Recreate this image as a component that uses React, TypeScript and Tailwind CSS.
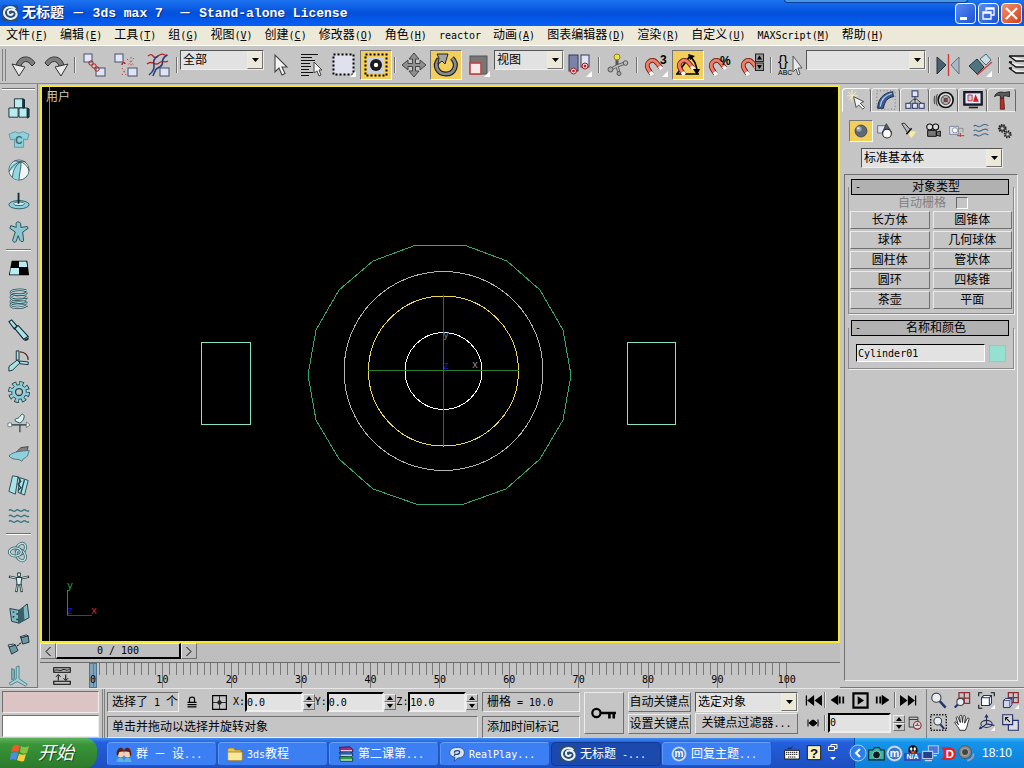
import type { ReactNode } from "react";

const RAISED = "border border-t-[#ebebeb] border-l-[#ebebeb] border-b-[#707070] border-r-[#707070]";
const SUNKEN = "border border-t-[#6f6f6f] border-l-[#6f6f6f] border-b-[#ededed] border-r-[#ededed]";

/* Latin runs are set two pixels smaller than the Chinese ones, so each takes half a Chinese cell */
function Txt({ children }: { children: string }) {
  return (
    <span className="whitespace-pre">
      {children.split(/([\u2e80-\uffff]+)/).map((part, i) =>
        i % 2 ? (
          <span key={i} className="text-[12px]">{part}</span>
        ) : (
          <span key={i} className="text-[10px]">{part}</span>
        )
      )}
    </span>
  );
}

function Svg({ size = 24, children }: { size?: number; children: ReactNode }) {
  return (
    <svg
      width={size}
      height={size}
      viewBox="0 0 24 24"
      fill="none"
      fontFamily="Liberation Sans, sans-serif"
      fontWeight="bold"
      className="shrink-0 overflow-visible"
      aria-hidden="true"
    >
      {children}
    </svg>
  );
}

const flyout = <path d="M24 18v6h-6z" fill="#fff" />;

const magnet = (
  <>
    <path d="M7.500 21L4 15.500C1 9.500 8 4.500 12.500 9.500L17 15" stroke="#6e1d14" strokeWidth="4.800" />
    <path d="M7 20.500L4 15.500C1 9.500 8 4.500 12.500 9.500L16.500 14.500" stroke="#ee7d6a" strokeWidth="3" />
    <path d="M6.500 19l1.800 3M15.500 13.500l2 2.500" stroke="#fff" strokeWidth="3.600" />
  </>
);

const icons: Record<string, ReactNode> = {
  undo: (
    <>
      <path d="M4 13C6 2 18 1 23 10l-3 3C16 7 11 7 9 13z" fill="#7d7d7d" stroke="#333" />
      <path d="M0 11l13 3-6 9z" fill="#e9e9e9" stroke="#333" />
    </>
  ),
  redo: (
    <>
      <path d="M20 13C18 2 6 1 1 10l3 3c4-6 9-6 11 0z" fill="#7d7d7d" stroke="#333" />
      <path d="M24 11l-13 3 6 9z" fill="#e9e9e9" stroke="#333" />
    </>
  ),
  link: (
    <>
      <rect x="2" y="1" width="8" height="8" fill="#e4e8f5" stroke="#44506e" />
      <rect x="14" y="15" width="9" height="8" fill="#dfe4f2" stroke="#44506e" />
      <circle cx="9" cy="10" r="2.200" stroke="#b02020" />
      <circle cx="12" cy="13" r="2.200" stroke="#b02020" />
      <circle cx="15" cy="16" r="2.200" stroke="#b02020" />
    </>
  ),
  unlink: (
    <>
      <rect x="1" y="1" width="8" height="8" fill="#e4e8f5" stroke="#44506e" />
      <rect x="14" y="15" width="9" height="8" fill="#dfe4f2" stroke="#44506e" />
      <path d="M8 12c0-3 3-3 3-1" stroke="#b02020" strokeWidth="1.400" />
      <path d="M13 6l8 7M20 5l-6 7M8 15l4 7M8 22l3-5M17 4v9" stroke="#c04a4a" strokeDasharray="1.500 2" />
    </>
  ),
  bind: (
    <>
      <path d="M2 3c6-5 4 5 10 0s6 1 10-1M1 11c6-5 7 3 12-1s5 1 9-2" stroke="#c02020" strokeWidth="1.300" />
      <path d="M12 3C2 9 14 13 3 22M21 2c-9 6-1 8-7 12M7 23c3-8 4-8 7-9" stroke="#28407c" strokeWidth="1.600" />
      <rect x="14" y="15" width="9" height="8" fill="#dfe4f2" stroke="#44506e" />
    </>
  ),
  cursor: <path d="M7 2v17l4-4 3 7 3-1.500-3-6.500h5z" fill="#f4f4f4" stroke="#444" strokeWidth="1.100" />,
  byName: (
    <>
      <path d="M1 1.500h17M1 4.500h11M1 7.500h14M1 10.500h9M1 13.500h10M1 16.500h8M1 19.500h12M1 22.500h8" stroke="#111" strokeWidth="1.200" />
      <path d="M14 9v11l3-2 2 5 2-1-2-5h3z" fill="#f4f4f4" stroke="#444" />
    </>
  ),
  region: (
    <>
      <rect x="1.500" y="1.500" width="20" height="20" fill="#dfe2ee" stroke="#000" strokeWidth="2" strokeDasharray="2 2" />
      {flyout}
    </>
  ),
  crossing: (
    <>
      <rect x="1.500" y="1.500" width="21" height="21" stroke="#000" strokeWidth="2" strokeDasharray="2 2" />
      <rect x="4" y="4" width="16" height="16" fill="#ccd0dc" />
      <circle cx="12" cy="12" r="6" fill="#1b1b1b" />
      <circle cx="12" cy="12" r="2.200" fill="#fff" />
    </>
  ),
  move: (
    <path
      d="M12 0l5 6h-3.500v4.500H18V7l6 5-6 5v-3.500h-4.500V18H17l-5 6-5-6h3.500v-4.500H6V17l-6-5 6-5v3.500h4.500V6H7z"
      fill="#909090"
      stroke="#444"
    />
  ),
  rotate: (
    <>
      <path d="M18 5c7 7 2 16-6 16S-1 13 5 6" stroke="#222" strokeWidth="5" />
      <path d="M18 5c7 7 2 16-6 16S-1 13 5 6" stroke="#8b8b8b" strokeWidth="2.600" />
      <path d="M3 1h11l-3 10-3-3-4 3 1-6z" fill="#a5a5a5" stroke="#222" />
    </>
  ),
  scale: (
    <>
      <rect x="4" y="3" width="17" height="18" fill="#777" stroke="#555" />
      <rect x="4" y="10" width="11" height="11" fill="#f5eaea" stroke="#c04444" strokeWidth="1.600" />
      {flyout}
    </>
  ),
  pivot: (
    <>
      <rect x="1" y="2" width="9" height="16" fill="#7c83a8" stroke="#333a5c" />
      <rect x="13" y="2" width="8" height="12" fill="#dfe3f3" stroke="#333a5c" />
      <circle cx="5.500" cy="18" r="3" fill="#f7d3d3" stroke="#a02020" />
      <circle cx="17" cy="13" r="3" fill="#f7d3d3" stroke="#a02020" />
      <circle cx="5.500" cy="18" r="1.300" fill="#d01818" />
      <circle cx="17" cy="13" r="1.300" fill="#d01818" />
      {flyout}
    </>
  ),
  manipulate: (
    <>
      <path d="M5 16l6-3 8-3M11 13V5M11 13l2 7" stroke="#555" strokeWidth="3" />
      <path d="M5 16l6-3 8-3M11 13l2 7" stroke="#bbb" strokeWidth="1.400" />
      <circle cx="11" cy="4" r="3" fill="#efe04a" stroke="#8d8420" />
      <circle cx="4.500" cy="16.500" r="2.500" fill="#aaa" stroke="#555" />
      <circle cx="19.500" cy="10" r="2.300" fill="#bbb" stroke="#555" />
      <circle cx="13" cy="20.500" r="2" fill="#aaa" stroke="#555" />
    </>
  ),
  snap3: (
    <>
      {magnet}
      <text x="16" y="11" fontSize="12" fill="#000">3</text>
      {flyout}
    </>
  ),
  snapAngle: (
    <>
      <path d="M1 21L14 3M0 21h23M13 3c5 3 8 9 8 17" stroke="#000" strokeWidth="1.600" />
      <path d="M12 1l7 2-5 4zM17 16h7l-3 6z" fill="#000" />
      {magnet}
    </>
  ),
  snapPercent: (
    <>
      {magnet}
      <text x="12" y="12" fontSize="12" fill="#000">%</text>
    </>
  ),
  snapSpinner: (
    <>
      {magnet}
      <rect x="15.500" y="1" width="8" height="7.500" fill="#999" stroke="#222" />
      <rect x="15.500" y="10" width="8" height="7.500" fill="#999" stroke="#222" />
      <path d="M17 6.500h5l-2.500-4zM17 12h5l-2.500 4z" fill="#000" />
    </>
  ),
  namedSel: <path d="M15 3v16l3-3 2 6 2-1-2-6h4z" fill="#e9e9e9" stroke="#555" />,
  mirror: (
    <>
      <path d="M1 4l9 8-9 9z" fill="#49626b" stroke="#24343a" />
      <path d="M23 4l-8 8 8 9z" fill="#aab8c6" stroke="#64727e" />
      <path d="M12.500 1v22" stroke="#d23a3a" strokeWidth="1.400" />
    </>
  ),
  align: (
    <>
      <path d="M1 13l8-7 7 8-7 7z" fill="#4f7480" stroke="#24343a" />
      <path d="M12 6l6-5 5 6-5 5z" fill="#c8dde4" stroke="#4f6a74" />
      <path d="M9 22L24 9" stroke="#d23a3a" strokeWidth="1.400" />
      {flyout}
    </>
  ),
  layers: (
    <path d="M3 3h24M3 3l7 5h16M3 9l7 5h16M3 9h3M3 15l7 5h16M3 15h3" stroke="#111" strokeWidth="1.300" fill="#eee" />
  ),

  /* reactor bar */
  boxes: (
    <g fill="#b9ecf2" stroke="#142a30">
      <path d="M7 2h9l2 1v9H7z" />
      <path d="M1 12h10v10H1zM12 12h9v10h-9z" />
      <path d="M16 2l2 1v9h-2zM21 12l2 1v9l-2 1z" fill="#1f3a40" />
    </g>
  ),
  shirt: (
    <>
      <path d="M8 4c2 2 6 2 8 0l7 3-2 6-4-1v9H7v-9l-4 1-2-6z" fill="#8fd0da" stroke="#5b98a3" />
      <text x="8" y="17" fontSize="11" fill="#356b76">C</text>
    </>
  ),
  ball: (
    <>
      <circle cx="12" cy="12" r="11" fill="#f0f6f7" stroke="#45636a" />
      <path d="M14 3C8 7 5 13 5 20c2 2 5 3 7 3 0-8 3-14 2-20zM2 9c2-4 7-7 12-6L1 15z" fill="#92d8e2" />
      <path d="M14 3C8 7 5 13 5 20M14 3c1 7-2 12-2 20M14 3C9 4 3 9 1 14M14 3c5 2 8 6 9 10M7 2l7 1 5 0" stroke="#37565e" />
    </>
  ),
  rigid: (
    <>
      <ellipse cx="12" cy="16" rx="11" ry="4.500" fill="#8fd0da" stroke="#2b5963" />
      <ellipse cx="12" cy="15" rx="6" ry="2" fill="#d8f4f7" stroke="#2b5963" />
      <path d="M11.500 3v12" stroke="#142a30" strokeWidth="2" />
    </>
  ),
  star: (
    <path
      d="M11 1c3 0 3 2 3 6l7-1 1 2-6 4 1 9c0 2-3 2-4 0l-2-5-2 6c-1 2-4 1-4-1l3-9-6-4 1-3 6 2c0-3-1-6 2-6z"
      fill="#8cc6d0"
      stroke="#224a54"
    />
  ),
  checker: (
    <>
      <path d="M4 4h17l2 16H1z" fill="#000" />
      <path d="M12 5h8l1 6h-9zM3 12h9v7H2z" fill="#b9ecf2" />
    </>
  ),
  spring: (
    <>
      {[5, 10, 15, 19].map((y) => (
        <g key={y}>
          <path d={`M20 ${y - 2}C14 ${y - 4} 3 ${y - 3} 3 ${y}s12 4 18 0`} stroke="#2b4a52" strokeWidth="2.600" />
          <path d={`M20 ${y - 2}C14 ${y - 4} 3 ${y - 3} 3 ${y}s12 4 18 0`} stroke="#a9dde5" strokeWidth="1.100" />
        </g>
      ))}
    </>
  ),
  damper: (
    <>
      <path d="M1 3l3-2 6 7-3 3zM7 10l4-3 11 12-5 3z" fill="#a8e3ea" stroke="#142a30" strokeWidth="1.200" />
      <path d="M17 23l6-3-1 3-3 1z" fill="#142a30" />
    </>
  ),
  motor: (
    <>
      <path d="M1 18l9-7 3 3-8 8-4 1zM9 1h3v10h-3zM12 12l10 1v3l-9-1z" fill="#a8e3ea" stroke="#142a30" />
      <path d="M13 2c6 0 9 4 9 9" stroke="#5a2d24" strokeWidth="1.300" />
    </>
  ),
  gear: (
    <>
      <circle cx="12" cy="12" r="9.500" stroke="#25454d" strokeWidth="5" strokeDasharray="4.600 2.860" />
      <circle cx="12" cy="12" r="8" fill="#8fd0da" stroke="#25454d" />
      <circle cx="12" cy="12" r="9" stroke="#8fd0da" strokeWidth="4" strokeDasharray="2.900 4.170" strokeDashoffset="-.7" />
      <circle cx="12" cy="12" r="3.800" fill="#c4c4c4" stroke="#25454d" strokeWidth="1.400" />
    </>
  ),
  vane: (
    <>
      <path d="M0 14h23M13 14v8" stroke="#25353a" strokeWidth="1.200" />
      <path d="M8 10c-1-4 2-2 4-4s3-5 5-3-1 8-4 9z" fill="#d8f4f7" stroke="#25454d" />
      <path d="M0 12h4v4H0zM20 11l4 3-4 3z" fill="#fff" stroke="#25454d" strokeWidth=".6" />
    </>
  ),
  boat: (
    <>
      <path d="M9 10l5-5 8-1-2 7z" fill="#8c7b80" stroke="#444" />
      <path d="M1 14c5-5 14-5 22-6-1 6-3 8-6 9l-2 3-3-2C7 18 3 17 1 14z" fill="#8fd0da" stroke="#4b717a" />
    </>
  ),
  fracture: (
    <>
      <path d="M5 2l6 1-3 19-7-3zM13 4l9 3-4 16-7-3z" fill="#a8e3ea" stroke="#25454d" />
      <path d="M11 3l3 5-3 3 3 4-3 3M18 6l-4 15" stroke="#25454d" strokeWidth="1.400" />
    </>
  ),
  water: (
    <>
      {[6, 12, 18].map((y) => (
        <path key={y} d={`M1 ${y}c3-3 4 3 7.500 0s4 3 7.500 0 4 3 7 0`} stroke="#3f7683" strokeWidth="1.500" />
      ))}
    </>
  ),
  knot: (
    <>
      {[30, 150, 270].map((a) => (
        <g key={a} transform={`rotate(${a} 12 12)`}>
          <ellipse cx="12" cy="8" rx="4.500" ry="6.500" stroke="#365d66" strokeWidth="3.200" />
          <ellipse cx="12" cy="8" rx="4.500" ry="6.500" stroke="#b9dfe5" strokeWidth="1.600" />
        </g>
      ))}
    </>
  ),
  ragdoll: (
    <>
      <path d="M1 5l9 2M14 7l9-2M10.500 13l-1.500 9M13.500 13l1.500 9" stroke="#1d2f34" strokeWidth="2.600" />
      <path d="M2 5.200l8 1.800M14 7l8-1.800M10.500 13l-1.500 8M13.500 13l1.500 8" stroke="#d8f4f7" strokeWidth="1" />
      <path d="M9 6h6l-1 8h-4zM10.500 1h3v4h-3z" fill="#d8f4f7" stroke="#1d2f34" />
    </>
  ),
  hinge: (
    <>
      <path d="M2 6l10 2v14L4 20zM12 8l9-7 2 15-11 6z" fill="#7fb9c3" stroke="#1d3a41" />
      <path d="M12 8l5-4 1 15-6 3z" fill="#3c5f67" />
      <path d="M5 10h2M5 15h2M9 12h2M9 18h2" stroke="#1d3a41" strokeWidth="1.500" />
    </>
  ),
  p2p: (
    <>
      <path d="M1 14l7-2 3 6-7 4zM14 4l8-2 1 7-7 2z" fill="#6b98a2" stroke="#1d2f34" />
      <path d="M14 4l8-2-2-1-7 2zM1 14l7-2-2-1-6 1z" fill="#d8f4f7" stroke="#1d2f34" />
      <path d="M10 13l5-4" stroke="#1d2f34" strokeWidth="1.400" strokeDasharray="2 1" />
    </>
  ),
  prismatic: (
    <>
      <path d="M9 2l3-1v14l9 6-2 2-9-5-7 4-2-2 8-5z" fill="#9fd2da" stroke="#4b7f8a" />
      <path d="M4 4l3 1v10l-3 1z" fill="#7fb3bd" stroke="#4b7f8a" />
    </>
  ),

  /* command panel */
  create: (
    <>
      <path d="M6 0v14M0 7h13M1 2l11 10M11 2L2 12" stroke="#f6efb6" strokeWidth="1.200" />
      <path d="M8 8l3 13 3-3 5 5 2-2-5-5 4-2z" fill="#f4f4f4" stroke="#333" />
    </>
  ),
  modify: (
    <>
      <path d="M2 22C2 11 9 3 20 2l1 6c-7 1-11 6-12 14z" fill="#3a5a92" stroke="#15213e" />
      <path d="M5 20C6 11 11 6 19 4" stroke="#a8c4ee" strokeWidth="1.500" />
      <path d="M1 1h22v22H1z" stroke="#555" strokeDasharray="1 3" />
    </>
  ),
  hierarchy: (
    <>
      <path d="M12 7v5M4 17l6-6h4l7 6M12 11v6" stroke="#222" />
      <g fill="#dfe4f2" stroke="#3e4a72" strokeWidth="1.400">
        <rect x="8.500" y="1" width="7" height="7" />
        <rect x="1" y="16" width="6" height="6" />
        <rect x="9" y="16" width="6" height="6" />
        <rect x="17" y="16" width="6" height="6" />
      </g>
    </>
  ),
  motion: (
    <>
      <circle cx="14" cy="12" r="9" fill="#ddd" stroke="#111" strokeWidth="2" />
      <circle cx="14" cy="12" r="5.500" fill="#b4b4b4" stroke="#333" />
      <path d="M10 8l8 8M18 8l-8 8" stroke="#444" />
      <circle cx="14" cy="12" r="2" fill="#c33" stroke="#333" />
      <path d="M4 5c-2 4-2 10 0 14M1 7c-1 3-1 7 0 10" stroke="#222" />
    </>
  ),
  display: (
    <>
      <path d="M1 2h22v16H1z" fill="#22284a" stroke="#111" strokeWidth="1.500" />
      <path d="M3 4h18v12H3z" fill="#e8ecf8" />
      <path d="M6 6h5v7H6z" fill="#c8cff0" stroke="#c02020" />
      <path d="M12 14l3-9 4 9z" fill="#d02020" />
      <path d="M7 21h11" stroke="#222" strokeWidth="2" />
    </>
  ),
  utilities: (
    <>
      <path d="M3 8c2-6 8-6 12-5l6-1v6l-5-1h-2v3h-4V7c-2-1-4-1-7 1z" fill="#5a5a5a" stroke="#1a1a1a" />
      <path d="M10 10h4l1 13h-5z" fill="#b53224" stroke="#5a140e" />
    </>
  ),
  sphere: (
    <>
      <circle cx="12" cy="12" r="9" fill="#5e6878" stroke="#2d3440" />
      <circle cx="9" cy="9" r="4" fill="#97a2b2" />
      <circle cx="8" cy="8" r="1.800" fill="#dbe3ee" />
    </>
  ),
  shapes: (
    <>
      <path d="M1 4h12v11H1z" fill="#dfe4f2" stroke="#5a6284" strokeWidth="1.300" />
      <path d="M14 1l8 13H8z" fill="#555c74" stroke="#222" />
      <circle cx="15" cy="16" r="6.500" fill="#fff" stroke="#222" strokeWidth="1.600" />
    </>
  ),
  light: (
    <>
      <path d="M14 12l9 1-8 10-3-6z" fill="#f7ef9a" />
      <path d="M1 1l4-1 9 10-4 5z" fill="#b8b8b8" stroke="#222" strokeWidth="1.300" />
      <path d="M16 8L8 17" stroke="#111" strokeWidth="2.200" />
    </>
  ),
  camera: (
    <>
      <circle cx="7" cy="6" r="4.500" fill="#ddd" stroke="#111" strokeWidth="1.600" />
      <circle cx="16" cy="6" r="4.500" fill="#ddd" stroke="#111" strokeWidth="1.600" />
      <path d="M4 11h13v9H4zM17 14l6-2v8l-6-2z" fill="#777" stroke="#111" strokeWidth="1.500" />
    </>
  ),
  helper: (
    <>
      <path d="M1 5h13v12H1z" fill="#e4e8f5" stroke="#5a6284" />
      <circle cx="9" cy="11" r="4" fill="#fff" stroke="#666" />
      <path d="M12 19h11M17 15v6" stroke="#c03a3a" strokeWidth="1.500" />
      <path d="M15 8h6v6" stroke="#777" />
    </>
  ),
  warp: (
    <>
      {[5, 12, 19].map((y) => (
        <path key={y} d={`M1 ${y}c4-5 5 3 10 0s7-4 12-1`} stroke="#44688a" strokeWidth="1.600" />
      ))}
    </>
  ),
  systems: (
    <>
      <circle cx="8" cy="8" r="5" fill="#555" stroke="#222" strokeWidth="3" strokeDasharray="2 1.500" />
      <circle cx="16" cy="17" r="4.500" fill="#777" stroke="#222" strokeWidth="3" strokeDasharray="2 1.500" />
      <circle cx="8" cy="8" r="1.800" fill="#ddd" />
      <circle cx="16" cy="17" r="1.600" fill="#ddd" />
    </>
  ),

  /* status bar */
  curve: (
    <>
      <path d="M1 1h22v6H1zM1 19h22v4H1z" stroke="#000" strokeWidth="1.400" />
      <path d="M2 5c4-3 6 1 10-1s6 2 10-1M7 18v-7M4 13l3-3 3 3M17 10v7M14 15l3 3 3-3" stroke="#000" strokeWidth="1.300" />
    </>
  ),
  lock: (
    <>
      <path d="M7 12V6c0-5 10-5 10 0v6" stroke="#000" strokeWidth="2.400" />
      <path d="M3 12.500h18M3 17h18M3 21.500h18" stroke="#000" strokeWidth="2.500" />
    </>
  ),
  absolute: (
    <>
      <path d="M1 1h22v22H1z" stroke="#000" strokeWidth="1.800" />
      <path d="M12 1v22M1 12h22" stroke="#000" strokeWidth="1.200" />
      <circle cx="12" cy="12" r="3.500" fill="#222" />
    </>
  ),
  key: (
    <>
      <circle cx="5" cy="12" r="3.800" stroke="#000" strokeWidth="2" />
      <path d="M9 12h14M17 12v5M21 12v5" stroke="#000" strokeWidth="2.400" />
    </>
  ),
  toStart: <path d="M2 5v14M12 6v12L4.500 12zM23 6v12l-8-6z" fill="#000" stroke="#000" strokeWidth="1.800" />,
  prevFrame: <path d="M11 6v12L2 12zM15 6v12M21 6v12" fill="#000" stroke="#000" strokeWidth="3" />,
  play: (
    <>
      <path d="M2 2h20v20H2z" stroke="#000" strokeWidth="3" />
      <path d="M8 6v12l9-6z" fill="#000" />
    </>
  ),
  nextFrame: <path d="M13 6v12l9-6zM3 6v12M9 6v12" fill="#000" stroke="#000" strokeWidth="3" />,
  toEnd: <path d="M22 5v14M12 6v12l7.500-6zM1 6v12l8-6z" fill="#000" stroke="#000" strokeWidth="1.800" />,
  keyMode: <path d="M2 5v14M11 6v12l-7-6zM13 6v12l7-6zM22 5v14" fill="#000" stroke="#000" strokeWidth="2" />,
  timeConfig: (
    <>
      <path d="M2 2h15v17H2zM2 6h15" stroke="#333" strokeWidth="1.600" />
      <circle cx="16" cy="16" r="6.500" fill="#ddd" stroke="#8c2430" strokeWidth="1.800" />
      <path d="M16 12v4h4M12 16h4" stroke="#8c2430" strokeWidth="1.500" />
    </>
  ),
  zoom: (
    <>
      <path d="M13 12l9 10" stroke="#223070" strokeWidth="3.500" />
      <circle cx="9" cy="8" r="6.500" fill="#e8ecf4" stroke="#444" strokeWidth="1.600" />
    </>
  ),
  zoomAll: (
    <>
      <path d="M7 1h15v15H7zM14.500 1v15M7 8.500h15" stroke="#8c3038" strokeWidth="1.800" />
      <circle cx="9" cy="14" r="5" fill="#e8ecf4" stroke="#444" strokeWidth="1.500" />
      <path d="M5 18l-4 4" stroke="#223070" strokeWidth="3" />
    </>
  ),
  extents: (
    <>
      <path d="M1 6V1h5M18 1h5v5M6 23H1v-5" stroke="#111" strokeWidth="1.500" />
      <path d="M5 8l3-3h11v11l-3 3H5z" fill="#fff" stroke="#223070" strokeWidth="1.500" />
      <path d="M5 8h11v11M16 8l3-3" stroke="#223070" strokeWidth="1.500" />
      {flyout}
    </>
  ),
  extentsAll: (
    <>
      <path d="M9 1h14v14H9zM16 1v14M9 8h14" stroke="#8c3038" strokeWidth="1.800" />
      <path d="M2 12l3-3h9v9l-3 4H2z" fill="#cfd6ea" stroke="#223070" strokeWidth="1.400" />
      <path d="M2 12h9v10M11 12l3-3" stroke="#223070" />
      {flyout}
    </>
  ),
  zoomRegion: (
    <>
      <path d="M1 1h22v22H1z" stroke="#000" strokeWidth="2" strokeDasharray="2 2" />
      <path d="M14 14l6 7" stroke="#223070" strokeWidth="3" />
      <circle cx="11" cy="10" r="5.500" fill="#e8ecf4" stroke="#444" strokeWidth="1.500" />
    </>
  ),
  pan: (
    <path
      d="M8 23c-1-4-5-7-7-11 1-2 3 0 5 3L3 5c1-2 3-1 3 1l3 6-1-9c1-2 3-2 3 0l1 9 1-9c1-2 3-1 3 1l-1 9 4-7c1-1 3 0 2 2-2 5-2 10-5 15z"
      fill="#fff"
      stroke="#222"
      strokeWidth="1.300"
    />
  ),
  arc: (
    <>
      <ellipse cx="12" cy="14" rx="8" ry="5" stroke="#333" strokeWidth="1.500" />
      <path d="M12 2v12L3 21M12 14l11 2" stroke="#223070" strokeWidth="1.600" />
      <path d="M12 0l3 5H9zM1 22l2-5 3 3z" fill="#223070" />
      {flyout}
    </>
  ),
  maximize: (
    <>
      <path d="M9 9h14v14H9z" fill="#ddd" stroke="#223070" strokeWidth="1.600" />
      <path d="M1 1h14v14H1z" fill="#d4d4d4" stroke="#223070" strokeWidth="1.600" />
      <path d="M5 5l6 6M5 9V5h4" stroke="#111" strokeWidth="1.500" />
    </>
  ),

  /* task bar */
  max: (
    <>
      <rect width="24" height="24" rx="3" fill="#2b4f72" />
      <path d="M20 6C15 1 4 2 3 11c0 9 10 12 16 8 5-4 3-11-3-12-5-1-8 2-7 5 1 4 7 4 7 0" stroke="#e8f2f8" strokeWidth="3" />
    </>
  ),
  people: (
    <>
      <path d="M1 24c0-9 11-9 11 0zM12 24c0-9 11-9 11 0z" fill="#58b6d8" />
      <circle cx="7" cy="12" r="5" fill="#f6d2b0" />
      <circle cx="17" cy="12" r="5" fill="#f6d2b0" />
      <path d="M1 13C0 0 12 0 12 8L5 9l-2 6zM12 8c1-9 12-7 11 6l-2 1-1-6z" fill="#5e1e16" />
    </>
  ),
  folder: (
    <>
      <path d="M1 5l2-2h7l2 3h9v4H1z" fill="#e8c452" stroke="#9a7a20" strokeWidth="1.200" />
      <path d="M1 9h22v11l-2 2H3l-2-2z" fill="#f9e79a" stroke="#9a7a20" strokeWidth="1.200" />
    </>
  ),
  rar: (
    <>
      <path d="M2 2l16-1 4 4v4H4z" fill="#a5287a" stroke="#2d0a20" />
      <path d="M2 9l16-1 4 3v4H4z" fill="#2f5fae" stroke="#0f1f3e" />
      <path d="M2 16l16-1 4 3v5H4z" fill="#2f9a4a" stroke="#0d331a" />
      <path d="M4 7h17M4 14h17M4 21h17" stroke="#fff" strokeWidth="1.600" />
    </>
  ),
  real: (
    <>
      <path d="M12 2c7 0 11 3 11 8s-4 8-10 8l-5 5 1-6c-5-1-8-3-8-7s4-8 11-8z" fill="#d7e4f2" stroke="#2c4f86" strokeWidth="1.400" />
      <path d="M8 10c0-4 8-4 8-1 0 4-5 4-7 3l-1 3" stroke="#284a80" strokeWidth="2" />
    </>
  ),
  maxthon: (
    <>
      <circle cx="12" cy="12" r="11" fill="#dbeaf8" stroke="#7fa8d8" />
      <circle cx="12" cy="12" r="8.500" fill="#3f78c6" />
      <text x="12" y="17" fontSize="15" textAnchor="middle" fill="#fff">m</text>
    </>
  ),
  keyboard: (
    <>
      <path d="M5 6c2-3 5 1 8-3" stroke="#111" strokeWidth="1.300" />
      <path d="M1 8h22v13H1z" fill="#fff" stroke="#111" strokeWidth="1.400" />
      <path d="M3 11h18M3 14h18M6 18h12" stroke="#111" strokeWidth="1.500" strokeDasharray="2 1" />
    </>
  ),
  help: (
    <>
      <path d="M2 1h20v21H2z" fill="#f6f1c2" stroke="#111" strokeWidth="1.400" />
      <text x="12" y="19" fontSize="20" textAnchor="middle" fill="#111">?</text>
    </>
  ),
  photo: (
    <>
      <path d="M1 7h6l2-3h7l2 3h5v14H1z" fill="#35b5a8" stroke="#0b2220" strokeWidth="1.500" />
      <circle cx="12" cy="14" r="5.500" fill="#0c1c1c" stroke="#d0f0ea" />
    </>
  ),
  penguin: (
    <>
      <ellipse cx="12" cy="9" rx="8" ry="9" fill="#111" />
      <ellipse cx="9" cy="7" rx="2" ry="3" fill="#fff" />
      <ellipse cx="15" cy="7" rx="2" ry="3" fill="#fff" />
      <path d="M7 11h10l-5 3z" fill="#f0a020" />
      <path d="M4 13h16v3H4z" fill="#d82020" />
    </>
  ),
  network: (
    <>
      <path d="M9 1h14v11H9z" fill="#4a78d8" stroke="#b8c8e8" strokeWidth="1.500" />
      <path d="M1 9h14v10H1z" fill="#25408c" stroke="#b8c8e8" strokeWidth="1.500" />
      <path d="M4 22h10M16 15h5" stroke="#cfd8e8" strokeWidth="2" />
    </>
  ),
  dSign: (
    <>
      <path d="M2 3h12c12 2 11 18-1 18H1l4-5V8z" fill="#e0202c" />
      <text x="8" y="18" fontSize="16" fill="#fff">D</text>
    </>
  ),
  speaker: (
    <>
      <circle cx="10" cy="10" r="9" fill="#8a8a8a" stroke="#444" />
      <circle cx="10" cy="10" r="5" fill="#444" stroke="#ccc" />
      <path d="M13 22c6-1 9-5 9-10" stroke="#9aa4b4" strokeWidth="2.400" />
    </>
  ),
};

function Icon({ name, size }: { name: string; size?: number }) {
  return <Svg size={size}>{icons[name]}</Svg>;
}

function Tool({ name, label, active }: { name: string; label: string; active?: boolean }) {
  return (
    <button
      type="button"
      aria-label={label}
      className={
        active
          ? "flex h-[30px] w-8 shrink-0 items-center justify-center border border-t-[#777] border-l-[#777] border-b-white border-r-white bg-[#f2ce5c]"
          : "flex h-[30px] w-8 shrink-0 items-center justify-center"
      }
    >
      <Icon name={name} />
    </button>
  );
}

function Divider() {
  return (
    <div className="flex w-1.5 shrink-0 justify-center">
      <div className="h-4 w-0.5 border-l border-[#707070] bg-[#e8e8e8]" />
    </div>
  );
}

function DropDown({ label, value, width }: { label: string; value: string; width: string }) {
  return (
    <div className={`grid h-5 shrink-0 border border-t-[#555] border-l-[#555] border-b-[#eee] border-r-[#eee] bg-[#e2e2e2] ${width}`}>
      <select aria-label={label} className="col-start-1 row-start-1 w-full appearance-none pl-0.5 text-[12px] leading-4 outline-none">
        <option>{value}</option>
      </select>
      <span className={`pointer-events-none col-start-1 row-start-1 flex w-4 items-center justify-center justify-self-end bg-[#ece9d8] ${RAISED}`}>
        <svg width="7" height="4" viewBox="0 0 7 4" aria-hidden="true"><path d="M0 0h7L3.500 4z" /></svg>
      </span>
    </div>
  );
}

function Spinner({ label }: { label: string }) {
  return (
    <div className="flex w-3 shrink-0 flex-col">
      <button type="button" aria-label={`${label} +`} className={`flex h-2 items-center justify-center ${RAISED}`}>
        <svg width="6" height="4" viewBox="0 0 6 4"><path d="M0 4h6L3 0z" /></svg>
      </button>
      <button type="button" aria-label={`${label} -`} className={`flex h-2 items-center justify-center ${RAISED}`}>
        <svg width="6" height="4" viewBox="0 0 6 4"><path d="M0 0h6L3 4z" /></svg>
      </button>
    </div>
  );
}

const menus = [
  ["文件", "F"], ["编辑", "E"], ["工具", "T"], ["组", "G"], ["视图", "V"], ["创建", "C"], ["修改器", "O"],
  ["角色", "H"], ["reactor", ""], ["动画", "A"], ["图表编辑器", "D"], ["渲染", "R"], ["自定义", "U"],
  ["MAXScript", "M"], ["帮助", "H"],
];

function TitleBar() {
  return (
    <header className="relative flex h-[26px] shrink-0 items-center bg-linear-to-b from-[#1c73ef] via-[#0450dc] to-[#0660f4] px-0.5">
      <div className="absolute top-0 right-14 h-[3px] w-[184px] rounded-b border border-t-0 border-[#0b3f9c] bg-[#4796e6]" />
      <Icon name="max" size={16} />
      <h1 className="ml-1 flex-1 truncate font-['Liberation_Mono','Noto_Sans_CJK_SC',monospace] text-[13px] font-bold whitespace-pre text-white [text-shadow:1px_1px_#0a2a78]">
        <span className="text-[14px]">无标题</span>
        {" － 3ds max 7  － Stand-alone License"}
      </h1>
      <div className="flex gap-0.5">
        <button type="button" aria-label="最小化" className="h-[21px] w-[21px] rounded-sm border border-white bg-linear-to-br from-[#5a8cf0] to-[#1b4fd8]">
          <svg viewBox="0 0 19 19"><path d="M4 13h7v3H4z" fill="#fff" /></svg>
        </button>
        <button type="button" aria-label="还原" className="h-[21px] w-[21px] rounded-sm border border-white bg-linear-to-br from-[#5a8cf0] to-[#1b4fd8]">
          <svg viewBox="0 0 19 19"><path d="M7 7V4h8v7h-3M4 8h8v7H4zM4 9h8M7 5h8" fill="none" stroke="#fff" strokeWidth="1.300" /></svg>
        </button>
        <button type="button" aria-label="关闭" className="h-[21px] w-[21px] rounded-sm border border-white bg-linear-to-br from-[#f0906c] to-[#d03c14]">
          <svg viewBox="0 0 19 19"><path d="M4 4l11 11M15 4L4 15" stroke="#fff" strokeWidth="2.200" /></svg>
        </button>
      </div>
    </header>
  );
}

function MenuBar() {
  return (
    <nav className="flex h-5 shrink-0 items-center gap-3 overflow-hidden border-b border-white bg-[#ece9d8] px-1.5">
      {menus.map(([name, key]) => (
        <button type="button" key={name} className="shrink-0">
          <Txt>{key ? `${name}(` : name}</Txt>
          {key && <u className="text-[10px]">{key}</u>}
          {key && <Txt>)</Txt>}
        </button>
      ))}
    </nav>
  );
}

function MainToolbar() {
  return (
    <div className="flex h-[38px] shrink-0 items-center overflow-hidden border-b border-[#8a8a8a]">
      <div className="mr-0.5 ml-0.5 h-8 w-1 shrink-0 border-x border-[#808080]" />
      <Tool name="undo" label="撤销" />
      <Tool name="redo" label="重做" />
      <Divider />
      <Tool name="link" label="选择并链接" />
      <Tool name="unlink" label="断开链接" />
      <Tool name="bind" label="绑定到空间扭曲" />
      <Divider />
      <div className="h-[30px] shrink-0"><DropDown label="选择过滤器" value="全部" width="w-[84px]" /></div>
      <Tool name="cursor" label="选择对象" />
      <Tool name="byName" label="按名称选择" />
      <Tool name="region" label="矩形选择区域" />
      <Tool name="crossing" label="窗口/交叉" active />
      <Divider />
      <Tool name="move" label="选择并移动" />
      <Tool name="rotate" label="选择并旋转" active />
      <Tool name="scale" label="选择并缩放" />
      <div className="h-[30px] shrink-0"><DropDown label="参考坐标系" value="视图" width="w-[70px]" /></div>
      <Tool name="pivot" label="使用轴点中心" />
      <Divider />
      <Tool name="manipulate" label="选择并操纵" />
      <Divider />
      <Tool name="snap3" label="捕捉开关" />
      <Tool name="snapAngle" label="角度捕捉" active />
      <Tool name="snapPercent" label="百分比捕捉" />
      <Tool name="snapSpinner" label="微调器捕捉" />
      <Divider />
      <button type="button" aria-label="编辑命名选择集" className="grid h-[30px] w-8 shrink-0 place-items-center">
        <span className="col-start-1 row-start-1"><Icon name="namedSel" /></span>
        <span className="col-start-1 row-start-1 flex flex-col justify-self-start pl-1 text-left font-['Liberation_Sans',sans-serif] text-[7px] leading-2">
          <span className="text-[15px] leading-4">{"{}"}</span>
          ABC
        </span>
      </button>
      <div className="h-[30px] shrink-0"><DropDown label="命名选择集" value="" width="w-[120px]" /></div>
      <Divider />
      <Tool name="mirror" label="镜像" />
      <Tool name="align" label="对齐" />
      <Divider />
      <Tool name="layers" label="层管理器" />
    </div>
  );
}

const reactorTools = [
  ["boxes", "shirt", "ball", "rigid", "star"],
  ["checker", "spring", "damper", "motor", "gear", "vane", "boat", "fracture", "water"],
  ["knot", "ragdoll", "hinge", "p2p", "prismatic"],
];

function ReactorBar() {
  return (
    <aside className="flex w-[38px] shrink-0 flex-col overflow-hidden border-r border-b border-r-[#777] border-b-[#777] pt-1">
      <div className="mx-0.5 mb-0.5 h-0.5 shrink-0 border-t border-[#707070] bg-white" />
      {reactorTools.map((group, i) => (
        <div key={i} className="shrink-0">
          {i > 0 && <div className="mx-1.5 mt-0.5 mb-px h-0.5 border-t border-[#707070] bg-white" />}
          {group.map((name) => (
            <button type="button" key={name} aria-label={name} className="flex h-[31px] w-full items-center justify-center">
              <Icon name={name} size={22} />
            </button>
          ))}
        </div>
      ))}
    </aside>
  );
}

function Viewport() {
  return (
    <div className="grid min-h-0 flex-1 border-2 border-[#f6e92c] bg-black">
      <svg viewBox="42 87 796 554" className="col-start-1 row-start-1 h-full min-h-0 w-full" fill="none" shapeRendering="crispEdges">
        <path d="M49.500 87v554" stroke="#4a93ac" />
        <path
          d="M416 245h48l43 16 33 29 23 40 8 45-8 45-23 39-34 30-42 15h-48l-43-15-34-30-23-39-8-45 8-45 23-40 34-29z"
          stroke="#35a66d"
        />
        <circle cx="443.500" cy="371" r="99.500" stroke="#b4b4b4" />
        <circle cx="443.500" cy="371" r="75" stroke="#ecd84e" />
        <circle cx="443.500" cy="371" r="38.500" stroke="#fff" />
        <path d="M443.500 295v151" stroke="#d0202c" />
        <path d="M368 370.500h151" stroke="#26802e" />
        <path d="M201.500 342.500h49v82h-49zM627.500 342.500h48v82h-48z" stroke="#8ce0ca" />
        <path d="M67.500 590v25" stroke="#1f9a2a" />
        <path d="M67 615.500h25" stroke="#a81c1c" />
        <g fontFamily="Liberation Mono, monospace" fontSize="10">
          <text x="443" y="338" fill="#808080">y</text>
          <text x="472" y="368" fill="#909090">x</text>
          <text x="443" y="369" fill="#1a1ac8">z</text>
          <text x="67" y="589" fill="#35b040">y</text>
          <text x="91" y="614" fill="#d82a2a">x</text>
          <text x="67" y="614" fill="#1a1ac8">z</text>
        </g>
      </svg>
      <span className="col-start-1 row-start-1 h-4 pt-0.5 pl-1 text-[12px] leading-4 text-[#c8c8c8]">用户</span>
    </div>
  );
}

const ticks = Array.from({ length: 101 }, (_, i) => i);

function TimeLine() {
  return (
    <div className="shrink-0">
      <div className="flex h-5 items-start border-b border-[#6a6a6a] bg-[#bebebe]">
        <button type="button" aria-label="上一帧" className={`flex h-4 w-4 items-center justify-center ${RAISED}`}>
          <svg width="6" height="9" viewBox="0 0 6 9" fill="none" stroke="#000"><path d="M5.500 0L1 4.500 5.500 9" /></svg>
        </button>
        <button type="button" className="h-4 w-[125px] border border-t-[#eee] border-r-2 border-b-2 border-l-[#eee] border-r-black border-b-black leading-3">
          <Txt>0 / 100</Txt>
        </button>
        <button type="button" aria-label="下一帧" className={`flex h-4 w-4 items-center justify-center ${RAISED}`}>
          <svg width="6" height="9" viewBox="0 0 6 9" fill="none" stroke="#000"><path d="M.5 0L5 4.500.5 9" /></svg>
        </button>
      </div>
      <div className="flex h-[25px]">
        <button type="button" aria-label="打开迷你曲线编辑器" className="flex w-[44px] shrink-0 items-center justify-center">
          <Icon name="curve" size={18} />
        </button>
        <div className="mr-[53px] ml-[9px] flex flex-1 justify-between">
          {ticks.map((t) => (
            <div key={t} className="grid w-0 justify-center">
              {t === 0 && <div className="col-start-1 row-start-1 h-[25px] w-2 border border-[#4c7590] bg-[#7fa3bb]" />}
              <div className={t % 10 ? "col-start-1 row-start-1 h-3 w-px bg-[#777]" : "col-start-1 row-start-1 mx-auto h-[25px] w-px bg-[#777]"} />
              {t % 10 === 0 && (
                <span className="col-start-1 row-start-1 self-end text-center text-[10px] leading-4">{t}</span>
              )}
            </div>
          ))}
        </div>
      </div>
    </div>
  );
}

const panelTabs = [
  ["create", "创建"], ["modify", "修改"], ["hierarchy", "层次"], ["motion", "运动"], ["display", "显示"], ["utilities", "工具"],
];
const categories = [
  ["sphere", "几何体"], ["shapes", "图形"], ["light", "灯光"], ["camera", "摄影机"], ["helper", "辅助对象"], ["warp", "空间扭曲"], ["systems", "系统"],
];
const primitives = ["长方体", "圆锥体", "球体", "几何球体", "圆柱体", "管状体", "圆环", "四棱锥", "茶壶", "平面"];

function Rollout({ title, children }: { title: string; children: ReactNode }) {
  return (
    <section className="mx-[3px]">
      <button type="button" className="mx-[3px] flex h-4 w-[158px] items-center border border-black bg-[#b1b1b1] text-[12px] leading-3">
        <span className="w-3 text-center text-[10px]">-</span>
        <span className="flex-1 text-center">{title}</span>
      </button>
      <div className="-mt-2 border border-t-0 border-[#8a8a8a] px-px pt-2 shadow-[1px_1px_#eee]">{children}</div>
    </section>
  );
}

function CommandPanel() {
  return (
    <aside className="flex w-[184px] shrink-0 flex-col overflow-hidden border-b border-[#777] pt-1">
      <div role="tablist" className="flex shrink-0 pl-0.5">
        {panelTabs.map(([name, label], i) => (
          <button
            type="button"
            role="tab"
            key={name}
            aria-label={label}
            className={
              i
                ? "flex h-6 w-[29px] items-center justify-center rounded-t-sm border border-t-[#eee] border-r-[#666] border-b-[#eee] border-l-[#eee]"
                : "flex h-6 w-[29px] items-center justify-center rounded-t-sm border border-t-white border-r-[#666] border-b-[#c4c4c4] border-l-white"
            }
          >
            <Icon name={name} size={20} />
          </button>
        ))}
      </div>
      <div className="mt-2 flex shrink-0 pl-[9px]">
        {categories.map(([name, label], i) => (
          <button
            type="button"
            key={name}
            aria-label={label}
            className={
              i
                ? "flex h-[22px] w-6 items-center justify-center"
                : "flex h-[22px] w-6 items-center justify-center border border-t-[#777] border-l-[#777] border-b-white border-r-white bg-[#f2ce5c]"
            }
          >
            <Icon name={name} size={16} />
          </button>
        ))}
      </div>
      <div className="mt-1.5 flex shrink-0 pl-[21px]">
        <DropDown label="子类别" value="标准基本体" width="w-[142px]" />
      </div>
      <div className={`mt-1.5 mr-1.5 mb-1.5 ml-1 flex min-h-0 flex-1 flex-col gap-1.5 overflow-hidden pt-1 ${SUNKEN}`}>
        <Rollout title="对象类型">
          <label className="flex h-4 items-center justify-center gap-2.5 pl-1 text-[12px] leading-4 text-[#808080]">
            自动栅格
            <input type="checkbox" disabled className="h-3 w-3 appearance-none border border-t-[#666] border-l-[#666] border-b-white border-r-white" />
          </label>
          <div className="mb-1 grid grid-cols-2 gap-x-[3px] gap-y-0.5">
            {primitives.map((name) => (
              <button type="button" key={name} className={`h-[18px] text-[12px] leading-4 ${RAISED}`}>{name}</button>
            ))}
          </div>
        </Rollout>
        <Rollout title="名称和颜色">
          <div className="flex items-center gap-1 px-1.5 pt-2 pb-1.5">
            <input aria-label="名称" defaultValue="Cylinder01" className="h-[18px] min-w-0 flex-1 border border-t-black border-l-black border-b-white border-r-white bg-[#e2e2e2] px-px text-[10px] outline-none" />
            <button type="button" aria-label="对象颜色" className="h-[17px] w-[17px] border border-[#b8b8b8] bg-[#96e0d2]" />
          </div>
        </Rollout>
      </div>
    </aside>
  );
}

const axes = [["X", "0.0"], ["Y", "0.0"], ["Z", "10.0"]];

function StatusBar() {
  return (
    <div className="flex h-[50px] shrink-0 overflow-hidden border-t border-[#e6e6e6]">
      <div className="flex w-[100px] shrink-0 flex-col gap-0.5 pt-0.5 pl-0.5">
        <input aria-label="宏录制" className={`h-[22px] w-[97px] bg-[#dcc4c4] px-1 text-[10px] ${SUNKEN}`} />
        <input aria-label="脚本侦听器" className={`h-[22px] w-[97px] bg-white px-1 text-[10px] ${SUNKEN}`} />
      </div>
      <div className="mr-0.5 ml-0.5 w-[3px] shrink-0 border-x border-[#808080]" />
      <div className="flex min-w-[472px] flex-1 flex-col gap-1 pt-[3px]">
        <div className="flex h-5 items-center">
          <div className={`flex h-5 w-[72px] shrink-0 items-center overflow-hidden pl-1 ${SUNKEN}`}><Txt>选择了 1 个</Txt></div>
          <button type="button" aria-label="选择锁定" className="flex w-[26px] justify-center"><Icon name="lock" size={12} /></button>
          <button type="button" aria-label="绝对模式" className="flex w-7 justify-center"><Icon name="absolute" size={15} /></button>
          {axes.map(([axis, value]) => (
            <div key={axis} className="flex h-5 flex-1 items-center">
              <label className="flex flex-1 items-center">
                <span className="w-3 shrink-0 text-[10px]">{axis}:</span>
                <input
                  defaultValue={value}
                  className="h-5 w-0 flex-1 border-2 border-t-black border-l-black border-r-[#eee] border-b-[#eee] bg-[#e2e2e2] text-[10px] outline-none"
                />
              </label>
              <Spinner label={axis} />
            </div>
          ))}
          <div className={`ml-1 flex h-5 w-[98px] shrink-0 items-center pl-1 ${SUNKEN}`}><Txt>栅格 = 10.0</Txt></div>
        </div>
        <div className="flex flex-1 gap-1">
          <div className={`flex flex-1 items-center pl-1 text-[12px] ${SUNKEN}`}>单击并拖动以选择并旋转对象</div>
          <button type="button" className={`flex w-[98px] shrink-0 items-center pl-1 text-[12px] ${SUNKEN}`}>添加时间标记</button>
        </div>
      </div>
      <div className="flex shrink-0 gap-1 px-1 pt-[3px] pb-1">
        <button type="button" aria-label="设置关键点" className={`flex w-10 items-center justify-center ${RAISED}`}>
          <Icon name="key" size={26} />
        </button>
        <div className="flex w-[63px] flex-col gap-0.5 text-[12px] leading-4">
          <button type="button" className={`flex-1 whitespace-nowrap ${RAISED}`}>自动关键点</button>
          <button type="button" className={`flex-1 whitespace-nowrap ${RAISED}`}>设置关键点</button>
        </div>
        <div className="flex flex-col justify-between">
          <DropDown label="关键点过滤" value="选定对象" width="w-[103px]" />
          <button type="button" className={`h-[21px] leading-4 ${RAISED}`}><Txt>关键点过滤器...</Txt></button>
        </div>
      </div>
      <div className="flex w-[124px] shrink-0 flex-col justify-around pb-1 pl-0.5">
        <div className="flex h-5 items-center">
          <button type="button" aria-label="转至开头" className="flex w-[18px] justify-center"><Icon name="toStart" size={17} /></button>
          <Divider />
          <button type="button" aria-label="前一帧" className="flex w-5 justify-center"><Icon name="prevFrame" size={14} /></button>
          <button type="button" aria-label="播放动画" className="flex w-6 justify-center"><Icon name="play" size={17} /></button>
          <button type="button" aria-label="后一帧" className="flex w-5 justify-center"><Icon name="nextFrame" size={14} /></button>
          <Divider />
          <button type="button" aria-label="转至结尾" className="flex w-5 justify-center"><Icon name="toEnd" size={17} /></button>
        </div>
        <div className="flex h-5 items-center">
          <button type="button" aria-label="关键点模式" className="flex w-[18px] justify-center"><Icon name="keyMode" size={12} /></button>
          <Divider />
          <input aria-label="当前帧" defaultValue="0" className="mr-0.5 h-5 w-[63px] border-2 border-t-black border-l-black border-r-[#eee] border-b-[#eee] bg-[#e2e2e2] text-[10px] outline-none" />
          <Spinner label="当前帧" />
          <button type="button" aria-label="时间配置" className="flex w-5 justify-center"><Icon name="timeConfig" size={14} /></button>
        </div>
      </div>
      <div className="mr-0.5 grid w-24 shrink-0 grid-cols-4 border-l border-[#808080] pb-1">
        {["zoom", "zoomAll", "extents", "extentsAll", "zoomRegion", "pan", "arc", "maximize"].map((name) => (
          <button type="button" key={name} aria-label={name} className="flex items-center justify-center">
            <Icon name={name} size={17} />
          </button>
        ))}
      </div>
    </div>
  );
}

const tasks = [
  ["people", "群 － 设..."], ["folder", "3ds教程"], ["rar", "第二课第..."],
  ["real", "RealPlay..."], ["max", "无标题 -..."], ["maxthon", "回复主题..."],
];

function TaskBar() {
  return (
    <footer className="flex h-[30px] shrink-0 overflow-hidden bg-linear-to-b from-[#3f8cf3] via-[#245edb] via-15% to-[#1d4fc0] text-white">
      <button
        type="button"
        className="flex w-[97px] shrink-0 items-center gap-2 rounded-r-xl bg-linear-to-b from-[#5fb35c] via-[#3a9639] via-20% to-[#2c7a2c] pl-2.5 text-[18px] leading-5 italic [text-shadow:1px_1px_#1d4d1d]"
      >
        <svg width="20" height="18" viewBox="0 0 20 18" aria-hidden="true">
          <path d="M3 2c3-2 5-1 7 0L8 8C6 7 4 7 1 8z" fill="#ee5a2a" />
          <path d="M11 2c3 2 5 1 8 0l-2 7c-3 1-5 1-7-1z" fill="#86c440" />
          <path d="M1 9c3-1 5-1 7 0l-2 7c-2-1-4-1-6 0z" fill="#4b8ee8" />
          <path d="M9 10c3 1 5 1 7 0l-2 7c-2 1-5 0-7-1z" fill="#f8cf3a" />
        </svg>
        开始
      </button>
      <div className="flex min-w-0 flex-1 gap-px pt-1 pb-0.5 pl-2.5">
        {tasks.map(([name, label]) => (
          <button
            type="button"
            key={label}
            className={
              name === "max"
                ? "flex max-w-[160px] min-w-0 flex-1 items-center gap-1 overflow-hidden rounded-sm border border-[#123a94] bg-[#1c49ae] pl-2"
                : "flex max-w-[160px] min-w-0 flex-1 items-center gap-1 overflow-hidden rounded-sm border border-t-[#6aa3fb] border-r-[#2257c8] border-b-[#2257c8] border-l-[#5b97f8] bg-[#3c7ff2] pl-2"
            }
          >
            <Icon name={name} size={16} />
            <Txt>{label}</Txt>
          </button>
        ))}
      </div>
      <div className="flex w-[82px] shrink-0 items-center gap-1.5 pl-3">
        <Icon name="keyboard" size={16} />
        <Icon name="help" size={16} />
        <svg width="10" height="18" viewBox="0 0 10 18" fill="none" stroke="#fff" aria-hidden="true">
          <path d="M3 2.500V.5h6v4H7M.5 2.500h6v4h-6z" />
          <path d="M2 13h6l-3 3z" fill="#fff" stroke="none" />
        </svg>
      </div>
      <div className="flex w-[170px] shrink-0 items-center gap-px border-l border-[#0c4a9c] bg-linear-to-b from-[#3cb4f6] via-[#1593ea] via-15% to-[#0f80d8]">
        <button type="button" aria-label="显示隐藏的图标" className="-ml-1.5 shrink-0">
          <svg width="18" height="18" viewBox="0 0 18 18" fill="none" aria-hidden="true">
            <circle cx="9" cy="9" r="8" fill="#2f7ee8" stroke="#9fd2fa" />
            <path d="M11 5L7 9l4 4" stroke="#fff" strokeWidth="2" />
          </svg>
        </button>
        <Icon name="photo" size={17} />
        <Icon name="maxthon" size={17} />
        <span className="grid h-4 w-[17px]">
          <span className="col-start-1 row-start-1 justify-self-center"><Icon name="penguin" size={14} /></span>
          <span className="col-start-1 row-start-1 self-end bg-[#2454b8] text-center font-['Liberation_Sans',sans-serif] text-[7px] leading-2 font-bold">N/A</span>
        </span>
        <Icon name="network" size={17} />
        <Icon name="dSign" size={17} />
        <Icon name="speaker" size={17} />
        <time className="ml-1.5 font-['Liberation_Sans',sans-serif] text-[12px]">18:10</time>
      </div>
    </footer>
  );
}

export default function App() {
  return (
    <div className="flex h-screen min-h-[600px] flex-col overflow-hidden bg-[#c5c5c5] font-['DejaVu_Sans_Mono','Noto_Sans_CJK_SC',monospace] text-[12px] leading-4 text-black">
      <TitleBar />
      <MenuBar />
      <MainToolbar />
      <main className="flex min-h-0 flex-1">
        <ReactorBar />
        <div className="ml-0.5 flex min-w-0 flex-1 flex-col pt-px">
          <Viewport />
          <TimeLine />
        </div>
        <CommandPanel />
      </main>
      <StatusBar />
      <TaskBar />
    </div>
  );
}
